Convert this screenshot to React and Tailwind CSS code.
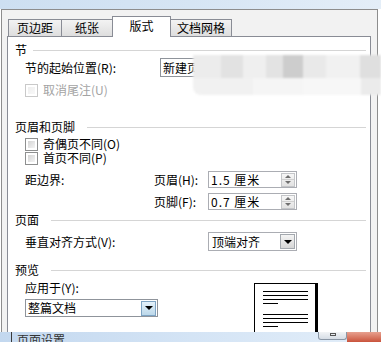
import React from 'react';

const Checkbox = ({ disabled }) => (
  <span
    className={`w-[13px] h-[13px] border flex p-[2px] bg-white ${
      disabled ? 'border-[#c9c9c9]' : 'border-[#8e8f8f]'
    }`}
  >
    <span
      className={`flex-1 bg-gradient-to-br ${
        disabled ? 'from-[#eeeeee] to-[#f8f8f8]' : 'from-[#d4d4d4] to-[#f4f4f4]'
      }`}
    />
  </span>
);

const SectionHead = ({ title, gap = 'ml-[12px]' }) => (
  <div className="flex items-center h-[14px] pr-[4px]">
    <span>{title}</span>
    <span className={`flex-1 ${gap} border-t border-[#d5d5d5]`} />
  </div>
);

const Arrow = () => (
  <span className="w-0 h-0 border-l-[4px] border-r-[4px] border-t-[4px] border-l-transparent border-r-transparent border-t-black" />
);

const DropButton = ({ blue }) => (
  <span
    className={`w-[15px] h-[15px] border flex items-center justify-center bg-gradient-to-b ${
      blue
        ? 'border-[#7ea4c4] from-[#e4f1fa] to-[#bcd8ea]'
        : 'border-[#a3a8ae] from-[#f4f4f4] to-[#d6d6d6]'
    }`}
  >
    <Arrow />
  </span>
);

const Spinner = () => (
  <span className="w-[14px] h-[14px] border border-[#c4c6c9] flex flex-col bg-gradient-to-b from-[#f7f7f7] to-[#e2e2e2]">
    <span className="flex-1 flex items-center justify-center border-b border-[#d0d0d0]">
      <span className="w-0 h-0 border-l-[3px] border-r-[3px] border-b-[3px] border-l-transparent border-r-transparent border-b-[#6f6f6f]" />
    </span>
    <span className="flex-1 flex items-center justify-center">
      <span className="w-0 h-0 border-l-[3px] border-r-[3px] border-t-[3px] border-l-transparent border-r-transparent border-t-[#6f6f6f]" />
    </span>
  </span>
);

const SpinInput = ({ value }) => (
  <div className="w-[89px] h-[17px] border border-[#abadb3] bg-white flex items-center pl-[2px] pr-px">
    <span className="flex-1 tracking-[1px]">{value}</span>
    <Spinner />
  </div>
);

const Tab = ({ label, active, width }) =>
  active ? (
    <div
      className={`${width} h-[21px] -ml-px relative z-10 -mb-px bg-white border border-b-0 border-[#898c95] flex items-center justify-center pb-[2px]`}
    >
      {label}
    </div>
  ) : (
    <div
      className={`${width} h-[17px] -ml-px first:ml-0 border border-b-0 border-[#898c95] bg-gradient-to-b from-[#f3f3f3] to-[#dedede] flex items-center justify-center`}
    >
      {label}
    </div>
  );

const PageLine = ({ short }) => (
  <span className={`h-px bg-black ${short ? 'w-[15px]' : 'w-[45px]'}`} />
);

export default function App() {
  return (
    <div className="relative w-[381px] h-[342px] overflow-hidden flex flex-col bg-white text-[12px] leading-[14px] text-black font-['Noto_Sans_CJK_SC',sans-serif]">
      {/* title bar remnant */}
      <div className="h-[9px] bg-gradient-to-r from-[#cddff1] via-[#d6e5f4] to-[#e4eef8]" />

      {/* dialog */}
      <div className="ml-px w-[377px] h-[323px] overflow-hidden border-l border-r border-t border-[#8d8d8d] bg-[#f2f2f2] flex flex-col">
        <div className="flex items-end h-[20px] mt-[6px] ml-[6px]">
          <Tab label="页边距" width="w-[54px]" />
          <Tab label="纸张" width="w-[52px]" />
          <Tab label="版式" width="w-[59px]" active />
          <Tab label="文档网格" width="w-[62px]" />
        </div>

        <div className="ml-[5px] w-[364px] flex-1 bg-white border-l border-r border-t border-[#898c95] pl-[7px] flex flex-col">
          {/* 节 */}
          <div className="mt-[6px]">
            <SectionHead title="节" gap="ml-[6px]" />
          </div>
          <div className="pl-[10px] mt-px flex items-center h-[19px]">
            <span className="w-[135px]">节的起始位置(R):</span>
            <div className="w-[116px] h-[19px] border border-[#8f949b] flex items-center pl-[2px]">
              新建页
            </div>
          </div>
          <div className="pl-[10px] mt-[6px] flex items-center h-[14px] gap-[5px] text-[#a3a3a3]">
            <Checkbox disabled />
            <span>取消尾注(U)</span>
          </div>

          {/* 页眉和页脚 */}
          <div className="mt-[23px]">
            <SectionHead title="页眉和页脚" />
          </div>
          <div className="pl-[10px] mt-[3px] flex items-center h-[14px] gap-[5px]">
            <Checkbox />
            <span>奇偶页不同(O)</span>
          </div>
          <div className="pl-[10px] flex items-center h-[14px] gap-[5px]">
            <Checkbox />
            <span>首页不同(P)</span>
          </div>
          <div className="pl-[10px] mt-[6px] flex items-center h-[17px]">
            <span className="w-[129px]">距边界:</span>
            <span className="w-[54px]">页眉(H):</span>
            <SpinInput value="1.5 厘米" />
          </div>
          <div className="pl-[10px] mt-[5px] flex items-center h-[17px]">
            <span className="w-[129px]" />
            <span className="w-[54px]">页脚(F):</span>
            <SpinInput value="0.7 厘米" />
          </div>

          {/* 页面 */}
          <div className="mt-[3px]">
            <SectionHead title="页面" />
          </div>
          <div className="pl-[10px] mt-[5px] flex items-center h-[19px]">
            <span className="w-[183px]">垂直对齐方式(V):</span>
            <div className="w-[89px] h-[19px] border border-[#abadb3] flex items-center pl-[3px] pr-px">
              <span className="flex-1">顶端对齐</span>
              <DropButton />
            </div>
          </div>

          {/* 预览 */}
          <div className="mt-[12px]">
            <SectionHead title="预览" />
          </div>
          <div className="pl-[10px] flex">
            <div className="w-[229px] flex flex-col">
              <span className="mt-[4px] h-[14px]">应用于(Y):</span>
              <div className="mt-[4px] w-[133px] h-[18px] border border-[#8f949b] flex items-center pl-[2px] pr-px">
                <span className="flex-1">整篇文档</span>
                <DropButton blue />
              </div>
            </div>
            <div className="mt-[6px] w-[64px] h-[70px] bg-white border-l border-t border-black border-r-[3px] pt-[7px] pl-[8px] flex flex-col gap-[3px]">
              <PageLine />
              <PageLine />
              <PageLine />
              <PageLine short />
              <span className="h-[4px]" />
              <PageLine />
              <PageLine />
              <PageLine />
              <PageLine short />
              <span className="h-[4px]" />
              <PageLine />
            </div>
          </div>
        </div>
      </div>

      {/* taskbar strip */}
      <div className="h-[10px] flex bg-gradient-to-r from-[#c3d8ef] via-[#d4e4f5] to-[#e3eef9] overflow-hidden">
        <span className="ml-[11px] w-px h-full bg-[#3a3a3a]" />
        <span className="ml-[5px] mt-[1px] text-[#333]">页面设置</span>
        <span className="flex-1" />
        <span className="w-[29px] h-[8px] border border-t-0 border-[#8b97a5] rounded-b-[3px] bg-gradient-to-b from-[#f2f4f6] to-[#d6dde5] flex justify-center">
          <span className="w-[6px] h-[3px] mt-[1px] border border-[#555]" />
        </span>
        <span className="w-[34px] h-full bg-gradient-to-b from-[#e7a08f] to-[#c9533c]" />
      </div>

      {/* blurred region over the start-position dropdown */}
      <div className="absolute left-[193px] top-[55px] w-[188px] h-[40px] flex flex-col blur-[1px]">
        <div className="h-[23px] flex">
          <span className="w-[28px] bg-[#ececec]" />
          <span className="w-[22px] bg-[#e2e2e2]" />
          <span className="w-[23px] bg-[#efefef]" />
          <span className="w-[17px] bg-[#e3e3e3]" />
          <span className="w-[20px] bg-[#cdcdcd]" />
          <span className="w-[23px] bg-[#e9e9e9]" />
          <span className="w-[34px] bg-[#f1f1f1]" />
          <span className="flex-1 bg-[#dfdfdf]" />
        </div>
        <div className="flex-1 flex rounded-bl-[8px] overflow-hidden">
          <span className="w-[60px] bg-[#f1f1f1]" />
          <span className="w-[50px] bg-[#f5f5f5]" />
          <span className="w-[58px] bg-[#f7f7f7]" />
          <span className="flex-1 bg-[#ebebeb]" />
        </div>
      </div>
    </div>
  );
}
